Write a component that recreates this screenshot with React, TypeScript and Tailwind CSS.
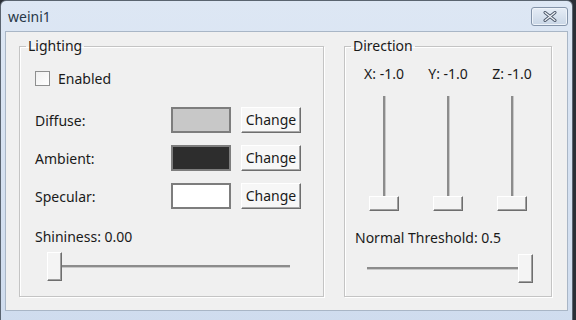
import React from 'react';

const Swatch = ({ color }: { color: string }) => (
    <div
        className="w-[60px] h-[26px] border-2 border-[#7d7d7d]"
        style={{ backgroundColor: color }}
    />
);

const ChangeButton = () => (
    <button className="w-[60px] h-[26px] bg-[#f7f7f7] border border-t-white border-l-white border-r-[#6e6e6e] border-b-[#6e6e6e] shadow-[inset_-1px_-1px_0_#a8a8a8] text-[14px] text-[#1a1a1a] leading-none">
        Change
    </button>
);

const ColorRow = ({ label, color }: { label: string; color: string }) => (
    <div className="flex items-center h-[26px]">
        <span className="w-[136px] text-[14px] text-[#1a1a1a]">{label}</span>
        <Swatch color={color} />
        <div className="w-[10px]" />
        <ChangeButton />
    </div>
);

const HThumb = () => (
    <div className="w-[15px] h-[29px] bg-[#f4f4f4] border border-t-white border-l-white border-r-[#6e6e6e] border-b-[#6e6e6e] shadow-[inset_-1px_-1px_0_#a0a0a0] shrink-0" />
);

const VThumb = () => (
    <div className="w-[30px] h-[15px] bg-[#f4f4f4] border border-t-white border-l-white border-r-[#6e6e6e] border-b-[#6e6e6e] shadow-[inset_-1px_-1px_0_#a0a0a0] shrink-0" />
);

const Track = () => <div className="flex-1 h-[3px] bg-[#8c8c8c] border-b border-[#c8c8c8]" />;

const VSlider = ({ label }: { label: string }) => (
    <div className="w-[64px] flex flex-col items-center">
        <span className="text-[14px] text-[#1a1a1a] leading-[18px] whitespace-nowrap">{label}</span>
        <div className="mt-[13px] flex flex-col items-center">
            <div className="w-[3px] h-[100px] bg-[#8c8c8c] border-r border-[#c8c8c8]" />
            <VThumb />
        </div>
    </div>
);

const GroupBox = ({ title, className, children }: { title: string; className?: string; children: React.ReactNode }) => (
    <fieldset className={`shrink-0 border border-[#c4c4c4] shadow-[inset_1px_1px_0_#fff,1px_1px_0_#fff] ${className ?? ''}`}>
        <legend className="ml-[6px] px-[2px] text-[14px] leading-[16px] text-[#1a1a1a]">{title}</legend>
        {children}
    </fieldset>
);

export default function App() {
    return (
        <div className="w-[576px] h-[320px] bg-[#2a2f36] font-['Noto_Sans',sans-serif] overflow-hidden">
            <div className="w-[573px] h-[330px] bg-gradient-to-b from-[#dde7f4] to-[#cfdcee] border border-[#5a6470] rounded-t-[6px] flex flex-col">
                <div className="h-[30px] flex items-center justify-between pl-[7px] pr-[4px]">
                    <span className="text-[14px] text-[#283848]">weini1</span>
                    <div className="w-[37px] h-[19px] rounded-[3px] border border-[#8494aa] bg-gradient-to-b from-[#e6edf6] to-[#c9d6e6] flex items-center justify-center shadow-[inset_0_0_0_1px_#eef3f9]">
                        <svg width="16" height="11" viewBox="0 0 16 11">
                            <path d="M3 1.5 L13 9.5 M13 1.5 L3 9.5" stroke="#4a5668" strokeWidth="3" strokeLinecap="round" />
                            <path d="M3 1.5 L13 9.5 M13 1.5 L3 9.5" stroke="#f2f5f9" strokeWidth="1.2" strokeLinecap="round" />
                        </svg>
                    </div>
                </div>
                <div className="mx-[4px] h-[280px] bg-[#f0f0f0] border border-[#a9b6c6] flex pt-[6px] pl-[13px] pr-[15px] pb-[13px] gap-[20px]">
                    <GroupBox title="Lighting" className="w-[305px] h-[259px]">
                        <div className="px-[15px]">
                            <div className="flex items-center gap-[8px] mt-[16px] h-[16px]">
                                <div className="w-[15px] h-[15px] border border-[#8e8f8f] bg-gradient-to-br from-[#f0f0f0] to-white" />
                                <span className="text-[14px] text-[#1a1a1a]">Enabled</span>
                            </div>
                            <div className="mt-[21px] flex flex-col gap-[12px]">
                                <ColorRow label="Diffuse:" color="#c8c8c8" />
                                <ColorRow label="Ambient:" color="#2d2d2d" />
                                <ColorRow label="Specular:" color="#ffffff" />
                            </div>
                            <div className="mt-[19px] text-[14px] leading-[18px] text-[#1a1a1a]">Shininess: 0.00</div>
                        </div>
                        <div className="mt-[6px] flex items-center pl-[27px] pr-[33px]">
                            <HThumb />
                            <Track />
                        </div>
                    </GroupBox>
                    <GroupBox title="Direction" className="w-[208px] h-[259px]">
                        <div className="flex justify-center mt-[11px]">
                            <VSlider label="X: -1.0" />
                            <VSlider label="Y: -1.0" />
                            <VSlider label="Z: -1.0" />
                        </div>
                        <div className="mt-[18px] pl-[10px] text-[14px] leading-[18px] text-[#1a1a1a] whitespace-nowrap">Normal Threshold: 0.5</div>
                        <div className="mt-[7px] flex items-center pl-[22px] pr-[18px]">
                            <Track />
                            <HThumb />
                        </div>
                    </GroupBox>
                </div>
            </div>
        </div>
    );
}
